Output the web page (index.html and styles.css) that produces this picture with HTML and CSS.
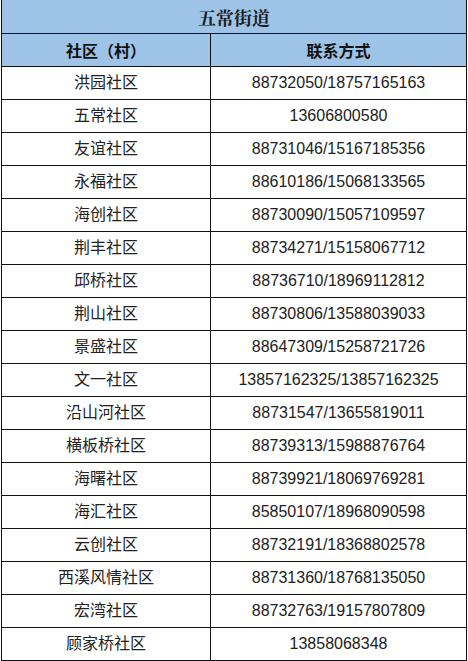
FILE: index.html
```html
<!DOCTYPE html>
<html lang="zh-CN">
<head>
<meta charset="utf-8">
<title>五常街道</title>
<link rel="stylesheet" href="styles.css">
</head>
<body>
<table class="contacts">
  <colgroup><col class="c1"><col class="c2"></colgroup>
  <thead>
    <tr class="title"><th colspan="2">五常街道</th></tr>
    <tr class="head"><th>社区（村）</th><th>联系方式</th></tr>
  </thead>
  <tbody>
    <tr><td>洪园社区</td><td>88732050/18757165163</td></tr>
    <tr><td>五常社区</td><td>13606800580</td></tr>
    <tr><td>友谊社区</td><td>88731046/15167185356</td></tr>
    <tr><td>永福社区</td><td>88610186/15068133565</td></tr>
    <tr><td>海创社区</td><td>88730090/15057109597</td></tr>
    <tr><td>荆丰社区</td><td>88734271/15158067712</td></tr>
    <tr><td>邱桥社区</td><td>88736710/18969112812</td></tr>
    <tr><td>荆山社区</td><td>88730806/13588039033</td></tr>
    <tr><td>景盛社区</td><td>88647309/15258721726</td></tr>
    <tr><td>文一社区</td><td>13857162325/13857162325</td></tr>
    <tr><td>沿山河社区</td><td>88731547/13655819011</td></tr>
    <tr><td>横板桥社区</td><td>88739313/15988876764</td></tr>
    <tr><td>海曙社区</td><td>88739921/18069769281</td></tr>
    <tr><td>海汇社区</td><td>85850107/18968090598</td></tr>
    <tr><td>云创社区</td><td>88732191/18368802578</td></tr>
    <tr><td>西溪风情社区</td><td>88731360/18768135050</td></tr>
    <tr><td>宏湾社区</td><td>88732763/19157807809</td></tr>
    <tr><td>顾家桥社区</td><td>13858068348</td></tr>
  </tbody>
</table>
</body>
</html>
```
FILE: styles.css
```css
html, body {
  margin: 0;
  padding: 0;
  background: #ffffff;
}
.contacts {
  margin-left: 1px;
  width: 466px;
  border-collapse: collapse;
  table-layout: fixed;
  font-family: "Liberation Sans", "Noto Sans CJK SC", sans-serif;
  font-size: 16px;
  color: #222222;
}
.c1 { width: 209px; }
.contacts th,
.contacts td {
  border: 1px solid #111111;
  padding: 0;
  height: 32px;
  text-align: center;
  vertical-align: middle;
  line-height: 20px;
}
.contacts .title th {
  border-top: none;
  height: 33px;
  background: #9dc3e6;
  font-family: "Noto Serif CJK SC", "Noto Sans CJK SC", serif;
  font-size: 18px;
  font-weight: 700;
  color: #1c1c1c;
}
.contacts .head th {
  background: #9dc3e6;
  font-family: "Noto Sans CJK SC", sans-serif;
  font-weight: 700;
  font-size: 16px;
  color: #111111;
}
.contacts td {
  font-weight: 400;
}
```
